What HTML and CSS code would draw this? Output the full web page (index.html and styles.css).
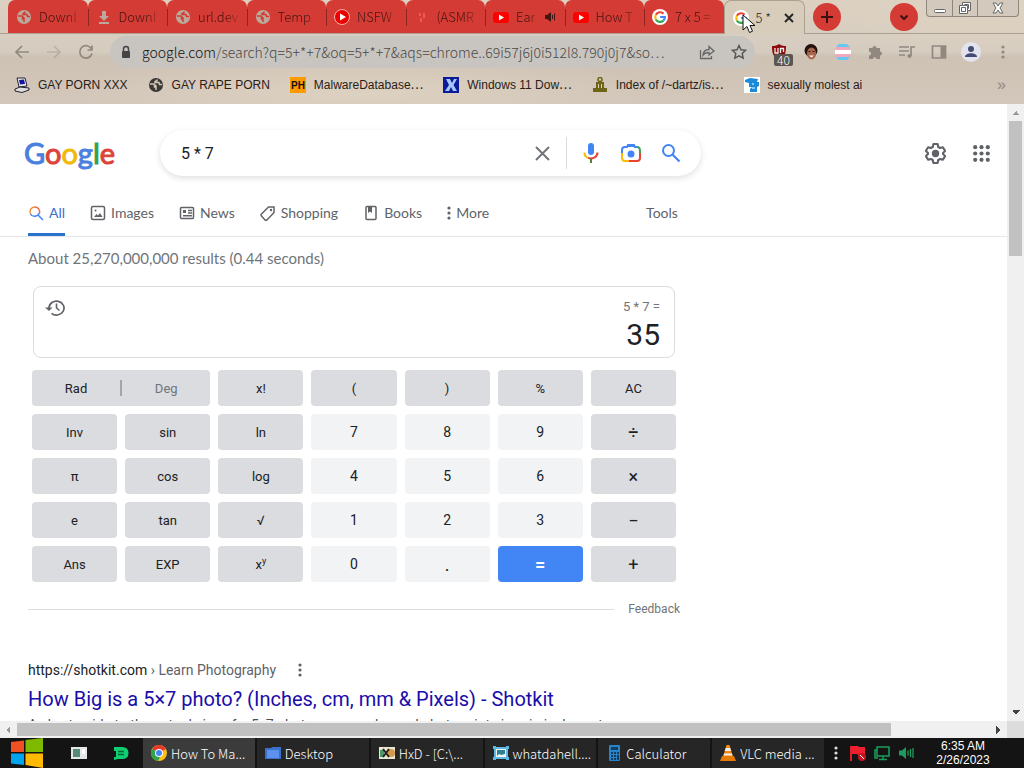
FILE: index.html
```html
<!DOCTYPE html>
<html lang="en">
<head>
<meta charset="utf-8">
<title>5 * 7 - Google Search</title>
<link rel="stylesheet" href="styles.css">
</head>
<body>
<svg class="defs" aria-hidden="true">
  <symbol id="globe" viewBox="0 0 16 16"><circle cx="8" cy="8" r="7" fill="currentColor"/><path d="M2 7h4l1.500 1.500h-1V10H8v3M9 2.500v1.200L7 4.500v1h4l.5 2H14" fill="none" stroke="var(--hole)" stroke-width="1.500"/></symbol>
  <symbol id="yt" viewBox="0 0 16 16"><rect y="3" width="16" height="11" rx="3" fill="#f00"/><path d="M6 5.500v6l5-3z" fill="#fff"/></symbol>
  <symbol id="g" viewBox="0 0 18 18"><circle cx="9" cy="9" r="9" fill="#fff"/><g fill="none" stroke-width="2.400"><path d="M4.300 6.500A5.500 5.500 0 0 1 13 5.200" stroke="#ea4335"/><path d="M4.300 6.500a5.500 5.500 0 0 0 0 5.200" stroke="#fbbc05"/><path d="M4.300 11.700a5.500 5.500 0 0 0 8.500 1.400" stroke="#34a853"/><path d="M12.800 13.100A5.500 5.500 0 0 0 14.500 9H9.200" stroke="#4285f4"/></g></symbol>
  <symbol id="dots" viewBox="0 0 4 16"><g fill="currentColor"><circle cx="2" cy="3" r="1.600"/><circle cx="2" cy="8" r="1.600"/><circle cx="2" cy="13" r="1.600"/></g></symbol>
</svg>
<div class="desktop">
  <header class="chrome">
    <div class="tabstrip">
      <nav class="tabs" aria-label="Open tabs">
        <button class="tab"><svg class="fav gray"><use href="#globe"/></svg><span>Downl</span></button>
        <button class="tab"><svg class="fav gray" viewBox="0 0 16 16"><path d="M6 2h4v5h3l-5 5-5-5h3zM3 13h10v2H3z" fill="currentColor"/></svg><span>Downl</span></button>
        <button class="tab"><svg class="fav gray"><use href="#globe"/></svg><span>url.dev</span></button>
        <button class="tab"><svg class="fav gray"><use href="#globe"/></svg><span>Temp</span></button>
        <button class="tab"><svg class="fav" viewBox="0 0 16 16"><circle cx="8" cy="8" r="7.500" fill="#e00" stroke="#f6b0a8"/><path d="M6 4.500v7l6-3.500z" fill="#fff"/></svg><span>NSFW</span></button>
        <button class="tab"><svg class="fav" viewBox="0 0 16 16"><path d="M6 4v3M10 4v5M7 9v4" stroke="#ef5a50" stroke-width="2"/></svg><span>(ASMR</span></button>
        <button class="tab"><svg class="fav"><use href="#yt"/></svg><span>Ear</span><svg class="sound" viewBox="0 0 12 12"><path d="M0 4h2l4-3v10L2 8H0z" fill="#421512"/><path d="M7.500 4v4M9.500 2.500v7" stroke="#421512"/></svg></button>
        <button class="tab"><svg class="fav"><use href="#yt"/></svg><span>How T</span></button>
        <button class="tab"><svg class="fav"><use href="#g"/></svg><span>7 x 5 =</span></button>
        <button class="tab active"><svg class="fav"><use href="#g"/></svg><span>5 *</span><svg class="close" viewBox="0 0 10 10"><path d="m1 1 8 8M9 1 1 9" stroke="#222" stroke-width="1.800"/></svg></button>
      </nav>
      <button class="round" aria-label="New tab"><svg viewBox="0 0 14 14"><path d="M7 1v12M1 7h12" stroke="#3a1210" stroke-width="2"/></svg></button>
      <span class="grow"></span>
      <button class="round small" aria-label="Search tabs"><svg viewBox="0 0 14 14"><path d="m3.500 5.500 3.500 3.500 3.500-3.500" fill="none" stroke="#3a1210" stroke-width="2"/></svg></button>
      <div class="winbtns">
        <button aria-label="Minimize"><svg viewBox="0 0 14 14"><rect x="1.500" y="8.500" width="11" height="3" rx="1" fill="#fff" stroke="#666"/></svg></button>
        <button aria-label="Restore"><svg viewBox="0 0 14 14"><path d="M4.500 1.500h8v8h-3v3h-8v-8h3z" fill="#fff" stroke="#666"/><path d="M3.500 6.500h4v4h-4zM4.500 4.500h5v5M6.500 4V3.500h4v4H10" fill="none" stroke="#666"/></svg></button>
        <button class="wide" aria-label="Close window"><svg viewBox="0 0 14 14"><path d="M2 2h3l2 3 2-3h3L9 7l3 5H9L7 9l-2 3H2l3-5z" fill="#fff" stroke="#666"/></svg></button>
      </div>
    </div>
    <div class="toolbar">
      <button class="tool" aria-label="Back"><svg viewBox="0 0 16 16"><path d="M15 8H2M8 2 2 8l6 6" class="ln"/></svg></button>
      <button class="tool faint" aria-label="Forward"><svg viewBox="0 0 16 16"><path d="M1 8h13M8 2l6 6-6 6" class="ln"/></svg></button>
      <button class="tool" aria-label="Reload"><svg viewBox="0 0 16 16"><path d="M13.500 5A6.200 6.200 0 1 0 14 9.500M14 1.500v4.500H9.500" class="ln"/></svg></button>
      <div class="omnibox">
        <svg class="lock" viewBox="0 0 10 14"><path d="M2.500 6V4a2.500 2.500 0 0 1 5 0v2" fill="none" stroke="#444" stroke-width="1.500"/><rect x="1" y="6" width="8" height="7" rx="1" fill="#444"/></svg>
        <div class="url"><b>google.com</b>/search?q=5+*+7&amp;oq=5+*+7&amp;aqs=chrome..69i57j6j0i512l8.790j0j7&amp;so⋯</div>
        <button class="tool" aria-label="Share"><svg viewBox="0 0 16 16"><path d="M1.500 6v8.500h11V12M4 11c.5-4 3-5.500 6-5.500V2.500l5 4.500-5 4V8.500c-2.500 0-4.500.5-6 2.500z" fill="none" stroke="#666" stroke-width="1.300"/></svg></button>
        <button class="tool" aria-label="Bookmark"><svg viewBox="0 0 16 16"><path d="m8 1.500 2 4.300 4.700.5-3.500 3.200 1 4.700L8 11.800l-4.200 2.400 1-4.700L1.300 6.300 6 5.800z" fill="none" stroke="#555" stroke-width="1.400"/></svg></button>
      </div>
      <button class="tool shield" aria-label="Ad blocker"><svg viewBox="0 0 16 16"><path d="M8 0c2 1.500 4 2 7 2 0 7-1 11-7 14C2 13 1 9 1 2c3 0 5-.5 7-2z" fill="#8b0b0b"/><path d="M4 4v5h3V4M9.500 9V4.500h3V8" fill="none" stroke="#eee" stroke-width="1.300"/></svg><span class="badge">40</span></button>
      <button class="tool" aria-label="Extension"><svg viewBox="0 0 16 16"><circle cx="8" cy="6.500" r="6.500" fill="#21120e"/><ellipse cx="8.500" cy="9.500" rx="4.500" ry="6" fill="#a9664c"/><path d="M5.500 7.500h2M9.500 7.500h2" stroke="#3b1b12" stroke-width="1.200"/><path d="M6 11.500h5l-2.500 2z" fill="#fff"/></svg></button>
      <button class="tool" aria-label="Extension"><svg viewBox="0 0 16 16"><path d="M4 0h8l3 3H1z" fill="#67c6f2"/><path d="M1 3h14v3H0z" fill="#f3a9bd"/><path d="M0 6h16v4H0z" fill="#fff"/><path d="M0 10h16l-1 3H1z" fill="#f3a9bd"/><path d="M1 13h14l-3 3H4z" fill="#67c6f2"/></svg></button>
      <button class="tool" aria-label="Extensions"><svg viewBox="0 0 16 16"><path d="M2 4h3.500a2 2 0 1 1 4 0H13v3.500a2 2 0 1 1 0 4V15H9.500a1.800 1.800 0 1 0-3.600 0H2v-3.500a2 2 0 1 0 0-4z" fill="#918980"/></svg></button>
      <button class="tool" aria-label="Media"><svg viewBox="0 0 16 16"><path d="M0 3h10M0 7h10M0 11h6M12 12V3h4" class="ln"/><circle cx="10.500" cy="12" r="2" fill="#918980"/></svg></button>
      <button class="tool" aria-label="Side panel"><svg viewBox="0 0 16 16"><path d="M1.500 2h13v12h-13z" class="ln"/><path d="M9.500 2h5v12h-5z" fill="#918980"/></svg></button>
      <button class="tool profile" aria-label="Profile"><svg viewBox="0 0 20 20"><circle cx="10" cy="10" r="10" fill="#e2e3ec"/><circle cx="10" cy="7" r="3" fill="#434c75"/><path d="M4 15c0-5 12-5 12 0z" fill="#434c75"/></svg></button>
      <button class="tool" aria-label="Menu"><svg class="kebab"><use href="#dots"/></svg></button>
    </div>
    <nav class="bookmarks" aria-label="Bookmarks">
      <a href="#"><svg viewBox="0 0 16 16"><path d="M3 1h8l2 8-8 1z" fill="#eee" stroke="#223"/><path d="m5 3 5-.5 1 4.500-5 .5z" fill="#1515a0"/><path d="m1 12 5-2 9 1v2l-7 2.500-7-1.500z" fill="#ddd" stroke="#223"/></svg>GAY PORN XXX</a>
      <a href="#"><svg class="dark"><use href="#globe"/></svg>GAY RAPE PORN</a>
      <a href="#"><svg viewBox="0 0 16 16"><rect width="16" height="16" fill="#f90"/><text x="8" y="12" text-anchor="middle" class="ph">PH</text></svg>MalwareDatabase⋯</a>
      <a href="#"><svg viewBox="0 0 16 16"><rect width="16" height="16" fill="#0a1a9a"/><path d="M3 2h4l2 4 2-4h3l-3.500 6 3.500 6H10L8 10l-2 4H2l4-6z" fill="#a5c8fa"/></svg>Windows 11 Dow⋯</a>
      <a href="#"><svg viewBox="0 0 16 16"><circle cx="8" cy="2.500" r="2" fill="none" stroke="#6d6415" stroke-width="1.500"/><path d="M4 5h8v6h3v4H1v-4h3z" fill="#6d6415"/><path d="M6.500 7v4M9.500 7v4" stroke="#ddd1b8"/></svg>Index of /~dartz/is⋯</a>
      <a href="#"><svg viewBox="0 0 16 16"><rect width="16" height="16" fill="#fff"/><path d="m1 3 5-2 8 1-1 3h2v4l-2 1v5H6v-3l2-2H5V6L1 5z" fill="#1b8bd8"/><path d="M8 7h2M8 11h3" stroke="#fff"/></svg>sexually molest ai</a>
      <span class="more">»</span>
    </nav>
  </header>

  <div class="view">
    <main class="page">
      <div class="searchrow">
        <a class="logo" href="#" aria-label="Google"><span class="b">G</span><span class="r">o</span><span class="y">o</span><span class="b">g</span><span class="n">l</span><span class="r">e</span></a>
        <form class="search">
          <input type="text" value="5 * 7" aria-label="Search">
          <button type="button" aria-label="Clear"><svg viewBox="0 0 20 20"><path d="m4 4 13 13M17 4 4 17" stroke="#70757a" stroke-width="2"/></svg></button>
          <span class="sep"></span>
          <button type="button" aria-label="Voice"><svg viewBox="0 0 20 20"><rect x="7" width="6" height="12" rx="3" fill="#4285f4"/><path d="M3.500 9.500c0 3 1.500 4.600 3.500 5.400" fill="none" stroke="#fbbc05" stroke-width="2"/><path d="M7 14.900c4 1.500 9.500-.5 9.500-5.400" fill="none" stroke="#ea4335" stroke-width="2"/><path d="M10 15.500V20" stroke="#5b7d3e" stroke-width="2"/></svg></button>
          <button type="button" aria-label="Image search"><svg viewBox="0 0 20 20" fill="none" stroke-width="2"><path d="M1 10V7q0-3 3-3h2l1-2h6l1 2h2" stroke="#4285f4"/><path d="M7 2h6v2H7z" fill="#4285f4"/><path d="M16 4q3 0 3 4v2" stroke="#34a853"/><path d="M1 10v5q0 3 3 3h4" stroke="#fbbc05"/><path d="M8 18h8q3 0 3-3v-5" stroke="#ea4335"/><circle cx="10" cy="11" r="3.500" fill="#4285f4"/></svg></button>
          <button type="submit" aria-label="Search"><svg viewBox="0 0 20 20"><circle cx="7.500" cy="7.500" r="5.500" fill="none" stroke="#4285f4" stroke-width="2"/><path d="m11.500 11.500 7 7" stroke="#4285f4" stroke-width="2.200"/></svg></button>
        </form>
        <span class="grow"></span>
        <button class="icon" aria-label="Settings"><svg viewBox="0 0 20 20"><path d="M8 1h4l.6 2.800 1.800 1L17 4l2.200 3.500-2 2v1l2 2L17 16l-2.600-.8-1.800 1L12 19H8l-.6-2.800-1.800-1L3 16 .8 12.500l2-2v-1l-2-2L3 4l2.600.8 1.800-1z" fill="none" stroke="#5f6368" stroke-width="2" stroke-linejoin="round"/><circle cx="10" cy="10" r="3.500" fill="#5f6368"/></svg></button>
        <button class="icon" aria-label="Apps"><svg viewBox="0 0 20 20"><g fill="#5f6368"><circle cx="4" cy="4" r="2"/><circle cx="10" cy="4" r="2"/><circle cx="16" cy="4" r="2"/><circle cx="4" cy="10" r="2"/><circle cx="10" cy="10" r="2"/><circle cx="16" cy="10" r="2"/><circle cx="4" cy="16" r="2"/><circle cx="10" cy="16" r="2"/><circle cx="16" cy="16" r="2"/></g></svg></button>
      </div>
      <nav class="modes">
        <a class="on" href="#"><svg viewBox="0 0 16 16" fill="none" stroke-width="1.500"><path d="M2.500 9A4.800 4.800 0 0 1 7 2" stroke="#ea8a35"/><path d="M7 2a4.800 4.800 0 0 1 4.500 6" stroke="#ea6a55"/><path d="M2.500 9C4 12 9 12.500 11.500 8M10 10l5 5" stroke="#4285f4"/></svg>All</a>
        <a href="#"><svg viewBox="0 0 16 16"><rect x="1.500" y="1.500" width="13" height="13" rx="1.500" class="st"/><path d="m4 12 2.500-3 1.500 1.500L10 8l2.500 4z" fill="#5f6368"/><circle cx="5.500" cy="5.500" r="1" fill="#5f6368"/></svg>Images</a>
        <a href="#"><svg viewBox="0 0 16 16"><rect x="1.500" y="2.500" width="13" height="11" rx="1" class="st"/><path d="M4 5h3v3H4z" fill="#5f6368"/><path d="M9 5.500h4M9 8h4M4 10.700h9" class="st"/></svg>News</a>
        <a href="#"><svg viewBox="0 0 16 16"><path d="M8.500 2H14v5.500L7 15q-1 .5-2 0l-3.500-4q-1-1 0-2z" class="st"/><circle cx="11" cy="5" r="1.200" fill="#5f6368"/></svg>Shopping</a>
        <a href="#"><svg viewBox="0 0 16 16"><rect x="3" y="1.500" width="10" height="13" rx="1" class="st"/><path d="M5 2h4v6L7 6.500 5 8z" fill="#5f6368"/></svg>Books</a>
        <a class="morelink" href="#"><svg class="kebab"><use href="#dots"/></svg>More</a>
        <a class="tools" href="#">Tools</a>
      </nav>
      <div class="results">
        <p class="stats">About 25,270,000,000 results (0.44 seconds)</p>
        <section class="calc">
          <div class="display">
            <svg viewBox="0 0 20 20"><path d="M4 10a7.500 7 0 1 1 2.500 5.300" fill="none" stroke="#5f6368" stroke-width="1.700"/><path d="M0 9.500h7.500L4 13z" fill="#5f6368"/><path d="M11.500 5.500V10l3 2.500" fill="none" stroke="#5f6368" stroke-width="1.600"/></svg>
            <div class="nums"><span class="expr">5 * 7 =</span><output>35</output></div>
          </div>
          <div class="keys">
            <div class="key mode"><button>Rad</button><i></i><button class="off">Deg</button></div><button class="key">x!</button><button class="key">(</button><button class="key">)</button><button class="key">%</button><button class="key">AC</button>
            <button class="key">Inv</button><button class="key">sin</button><button class="key">ln</button><button class="key num">7</button><button class="key num">8</button><button class="key num">9</button><button class="key op">÷</button>
            <button class="key">π</button><button class="key">cos</button><button class="key">log</button><button class="key num">4</button><button class="key num">5</button><button class="key num">6</button><button class="key op">×</button>
            <button class="key">e</button><button class="key">tan</button><button class="key">√</button><button class="key num">1</button><button class="key num">2</button><button class="key num">3</button><button class="key op">−</button>
            <button class="key">Ans</button><button class="key">EXP</button><button class="key"><span>x<sup>y</sup></span></button><button class="key num">0</button><button class="key num op">.</button><button class="key eq">=</button><button class="key op">+</button>
          </div>
        </section>
        <div class="feedback"><hr><a href="#">Feedback</a></div>
        <article class="hit">
          <div class="cite"><span>https://shotkit.com <em>› Learn Photography</em></span><svg class="kebab"><use href="#dots"/></svg></div>
          <h3><a href="#">How Big is a 5×7 photo? (Inches, cm, mm &amp; Pixels) - Shotkit</a></h3>
          <p>A short guide to the actual size of a 5x7 photo, commonly used photo print sizes in inches, etc.</p>
        </article>
      </div>
    </main>
    <div class="vbar"><i class="up"></i><div class="thumb"></div><i class="down"></i></div>
  </div>
  <div class="hbar"><i class="left"></i><div class="thumb"></div><i class="right"></i><div class="corner"></div></div>

  <footer class="taskbar">
    <button class="start" aria-label="Start"><svg viewBox="0 0 34 30"><path d="M1 4l13-1.500V14H1z" fill="#f25022"/><path d="M15.500 2 33 0v14H15.500z" fill="#7fba00"/><path d="M1 15.500h13V27L1 25.500z" fill="#00a4ef"/><path d="M15.500 15.500H33V30l-17.500-3z" fill="#ffb900"/></svg></button>
    <button class="pin" aria-label="Viewer"><svg viewBox="0 0 16 16"><rect y="2" width="16" height="12" fill="#e4e8e4"/><path d="M2 4h7v8H2z" fill="#55897a"/><path d="M11 4h3v5h-3z" fill="#fff"/></svg></button>
    <button class="pin" aria-label="Notes"><svg viewBox="0 0 16 16"><path d="M1 2h8q6.500 0 6.500 6T9 14H5l-4 1v-3h2V6H1z" fill="#10cf72"/><path d="M5 6.500h6M5 9.500h6" stroke="#063" stroke-width="1.500"/></svg></button>
    <nav class="tasks">
      <button class="task current"><svg viewBox="0 0 16 16"><circle cx="8" cy="8" r="8" fill="#fbc116"/><path d="M8 8 1 4a8 8 0 0 1 14 0z" fill="#e33b2e"/><path d="M8 8 1 4a8 8 0 0 0 6 12l3-6z" fill="#2fa24c"/><circle cx="8" cy="8" r="4" fill="#fff"/><circle cx="8" cy="8" r="3" fill="#4285f4"/></svg>How To Ma...</button>
      <button class="task"><svg viewBox="0 0 16 16"><path d="M0 3h6l1-1h9v12H0z" fill="#3c70c8"/><path d="M2 5h12v8H2z" fill="#5b92ee"/></svg>Desktop</button>
      <button class="task"><svg viewBox="0 0 16 16"><rect y="2" width="16" height="12" fill="#e9e6d2"/><path d="M1 5h4v7H1z" fill="#4b9a68"/><circle cx="12" cy="8" r="4" fill="#d49a4a"/><path d="m4 4 6 8M10 4l-6 8" stroke="#222" stroke-width="2"/></svg>HxD - [C:\...</button>
      <button class="task"><svg viewBox="0 0 16 16"><path d="M0 1h3v1h10V1h3v3h-1v8h1v3h-3v-1H3v1H0v-3h1V4H0z" fill="#60b8e4"/><path d="M3 4h10v8H3z" fill="#eef6f3"/><path d="M4 5h8v4l-4 1-2-1-2 2z" fill="#2f7e91"/></svg>whatdahell....</button>
      <button class="task"><svg viewBox="0 0 16 16"><rect x="3" width="11" height="16" rx="1" fill="#2584ce"/><path d="M5 2h7v3H5z" fill="#173d5b"/><path d="M5 7h2v2H5zm3 0h2v2H8zm3 0h2v2h-2zM5 10h2v2H5zm3 0h2v2H8zm3 0h2v5h-2zM5 13h2v2H5zm3 0h2v2H8z" fill="#173d5b"/></svg>Calculator</button>
      <button class="task"><svg viewBox="0 0 16 16"><path d="M6.500 0h3L13 12H3z" fill="#f28b10"/><path d="M5.800 3h4.400l1 3H4.800zM4 8.500h8l.5 2H3.500z" fill="#eee"/><path d="M2 11h12l2 5H0z" fill="#e87a08"/></svg>VLC media ...</button>
    </nav>
    <div class="tray">
      <svg class="kebab"><use href="#dots"/></svg>
      <svg viewBox="0 0 16 16"><path d="M1 1v15" stroke="#e0202c" stroke-width="2"/><path d="M2 1h6l1 1h6v8H8L7 9H2z" fill="#ee202f"/><circle cx="12" cy="12" r="4" fill="#c51422"/><path d="m10 10 4 4" stroke="#fff"/></svg>
      <svg viewBox="0 0 16 16"><path d="M3 2h12v9H3zM9 11v3M5 14.500h8M3 5H1v8h3" fill="none" stroke="#1b9c5c" stroke-width="1.500"/></svg>
      <svg viewBox="0 0 16 16"><path d="M1 5.500h3L8 2v12l-4-3.500H1z" fill="#1b9c5c"/><path d="M10 5.500v5M12.500 4v8M15 3v10" stroke="#1b9c5c" stroke-width="1.300"/></svg>
    </div>
    <time class="clock"><span>6:35 AM</span><span>2/26/2023</span></time>
  </footer>
  <svg class="cursor" viewBox="0 0 14 20"><path d="M1 1v15l4-3.500 2.500 6 3-1.300L8 11.500h5z" fill="#fff" stroke="#111"/></svg>
</div>
</body>
</html>
```
FILE: styles.css
```css
* { box-sizing: border-box; }
body { margin: 0; font-family: Roboto, "Liberation Sans", sans-serif; }
button { border: 0; padding: 0; background: none; font: inherit; color: inherit; }
a { color: inherit; text-decoration: none; }
svg { flex: none; width: 16px; height: 16px; display: block; }
.defs { position: absolute; width: 0; height: 0; }
.desktop { position: relative; display: flex; flex-direction: column; height: 100vh; overflow: hidden; }
.grow { flex: 1; }
.kebab { width: 4px; color: #5f6368; }

.chrome {
  font-family: "Noto Sans CJK KR", sans-serif;
  font-weight: 300;
  background:
    radial-gradient(ellipse 180px 50px at 96% 8%, #ded2c1, transparent),
    radial-gradient(ellipse 300px 40px at 35% 90%, #ddd1c1, transparent),
    linear-gradient(#dcd1c1 0, #d5ccc0 50%, #cec2b4 54%, #d2c7ba 100%);
}
.tabstrip { display: flex; align-items: center; height: 34px; padding: 0 5px 0 8px; border-bottom: 1px solid #aba091; }
.tabs { display: flex; align-self: stretch; flex: 0 1 797px; min-width: 0; }
.tab {
  --hole: #d43b34;
  position: relative; flex: 1 1 0; min-width: 0; height: 33px; display: flex; align-items: center; gap: 7px; padding: 0 4px 0 8px;
  border-radius: 7px 7px 0 0; background: #d43b34; color: #421512; font-size: 13px; overflow: hidden; white-space: nowrap; text-align: left;
}
.tab + .tab::before { content: ""; position: absolute; left: 0; top: 9px; height: 17px; border-left: 1px solid #8f2420; }
.tab span { flex: 1; min-width: 0; overflow: hidden; mask-image: linear-gradient(90deg, #000 60%, transparent); }
.tab.active { background: #d8ccbb; border: 1px solid #aba091; border-bottom: 0; height: 34px; color: #222; }
.tab.active::before { display: none; }
.tab.active span { mask-image: none; }
.gray { color: #bba89b; }
.sound { width: 12px; height: 12px; margin-right: 4px; }
.close { width: 10px; height: 10px; margin-right: 6px; }
.round { flex: none; width: 28px; height: 28px; margin-left: 8px; border-radius: 50%; background: #d43b34; display: grid; place-items: center; }
.round svg { width: 14px; height: 14px; }
.round.small { margin-right: 8px; }
.winbtns { flex: none; display: flex; align-self: flex-start; height: 17px; border: 1px solid #8d867d; border-top: 0; border-radius: 0 0 4px 4px; background: #d3cabd; }
.winbtns button { width: 25px; display: grid; place-items: center; }
.winbtns button + button { border-left: 1px solid #8d867d; }
.winbtns .wide { width: 41px; }
.winbtns svg { width: 14px; height: 14px; }

.toolbar { display: flex; align-items: center; height: 36px; padding: 0 5px 0 6px; color: #918980; }
.tool { position: relative; flex: none; width: 32px; height: 32px; display: grid; place-items: center; }
.faint { opacity: .4; }
.ln { fill: none; stroke: #918980; stroke-width: 1.7; }
.toolbar .kebab { color: #918980; }
.profile svg { width: 20px; height: 20px; }
.omnibox { flex: 1; min-width: 0; display: flex; align-items: center; height: 32px; margin: 0 8px; padding-left: 11px; border-radius: 16px; background: #c8c5c1; }
.lock { width: 10px; height: 14px; margin-right: 11px; }
.url { flex: 1; min-width: 0; overflow: hidden; white-space: nowrap; font-size: 14px; line-height: 24px; color: #4c4945; }
.url b { font-weight: 300; color: #111; }
.badge { position: absolute; left: 11px; top: 18px; padding: 0 3px; border-radius: 2px; background: #5c5650; color: #fff; font-size: 12px; line-height: 12px; }

.bookmarks { display: flex; align-items: center; gap: 20px; height: 34px; padding: 0 18px 4px 14px; font: 12px/20px "Liberation Sans", "Noto Sans CJK KR", sans-serif; color: #2a2018; white-space: nowrap; }
.bookmarks a { display: flex; align-items: center; gap: 8px; height: 20px; }
.dark { color: #3b3836; --hole: #d2c6b7; }
.ph { font: bold 10px "Liberation Sans", sans-serif; fill: #111; }
.more { margin-left: auto; color: #918980; font-size: 16px; }

.view { flex: 1; min-height: 0; display: flex; }
.page { flex: 1; min-width: 0; overflow: hidden; background: #fff; }
.searchrow { display: flex; align-items: center; padding: 26px 3px 0 24px; }
.logo { width: 136px; font: 400 29px/46px Lato, sans-serif; -webkit-text-stroke: 1px; }
.b { color: #4a80e0; } .r { color: #dc4437; } .y { color: #f0b90e; } .n { color: #34a050; }
.search { flex: 0 1 541px; display: flex; align-items: center; height: 46px; padding: 0 10px 0 19px; border-radius: 23px; background: #fff; box-shadow: 0 2px 6px #0002; }
.search input { flex: 1; min-width: 0; border: 0; outline: 0; background: none; font: 16px Roboto, sans-serif; color: #202124; }
.search button { width: 40px; height: 40px; display: grid; place-items: center; }
.search svg { width: 20px; height: 20px; }
.sep { width: 1px; height: 32px; margin: 0 4px; background: #dadce0; }
.icon { width: 46px; height: 40px; display: grid; place-items: center; }
.icon svg { width: 21px; height: 21px; }
.modes { display: flex; align-items: stretch; gap: 25px; height: 61px; padding: 16px 0 0 28px; border-bottom: 1px solid #e4e6e8; font: 14px Lato, sans-serif; color: #5f6368; }
.modes a { display: flex; align-items: center; gap: 5px; border-bottom: 3px solid transparent; }
.modes .on { color: #3b6fd0; border-color: #2a72cc; }
.tools { margin-left: 132px; }
.st { fill: none; stroke: #5f6368; stroke-width: 1.5; }
.results { width: 652px; margin-left: 28px; }
.stats { margin: 11px 0 18px; font: 15px/20px Lato, sans-serif; color: #70757a; }
.calc { padding: 0 4px; }
.display { display: flex; justify-content: space-between; height: 72px; margin: 0 1px 12px; padding: 11px 14px 0 11px; border: 1px solid #dadce0; border-radius: 8px; }
.display svg { width: 20px; height: 20px; }
.nums { display: flex; flex-direction: column; align-items: flex-end; }
.expr { font-size: 13px; line-height: 18px; color: #70757a; }
.nums output { font-size: 30px; line-height: 38px; color: #202124; }
.keys { display: grid; grid-template-columns: repeat(7, 1fr); gap: 8px; }
.key { height: 36px; border-radius: 4px; background: #dadce0; color: #202124; font-size: 13px; }
.mode { grid-column: span 2; display: flex; align-items: center; }
.mode button { flex: 1; }
.mode i { width: 2px; height: 16px; background: #a2a5a9; }
.off { color: #70757a; }
.num { background: #f1f3f4; font-size: 14px; }
.op { font-size: 18px; font-weight: 400; }
.eq { background: #4285f4; color: #fff; font-size: 18px; font-weight: 700; }
.key sup { font-size: 9px; line-height: 0; }
.feedback { display: flex; align-items: center; gap: 14px; margin-top: 18px; font-size: 12px; line-height: 18px; color: #70757a; }
.feedback hr { flex: 1; margin: 0; border: 0; border-top: 1px solid #dadce0; }
.hit { margin-top: 42px; }
.cite { display: flex; align-items: center; gap: 22px; font-size: 14px; line-height: 20px; color: #202124; }
.cite em { font-style: normal; color: #5f6368; }
.hit h3 { margin: 6px 0 2px; font-size: 20px; font-weight: 400; line-height: 26px; color: #1a0dab; white-space: nowrap; }
.hit p { margin: 0; font-size: 14px; line-height: 22px; color: #4d5156; white-space: nowrap; }

.vbar { width: 17px; display: flex; flex-direction: column; align-items: center; background: #f0f0f0; }
.vbar .thumb { width: 13px; height: 135px; background: #c1c1c1; margin-bottom: auto; }
.up, .down { width: 8px; height: 17px; }
.up { background: conic-gradient(from 135deg at 50% 0, #999 90deg, transparent 0) 0 7px / 8px 4px no-repeat; }
.down { background: conic-gradient(from 315deg at 50% 100%, #444 90deg, transparent 0) 0 6px / 8px 4px no-repeat; }
.hbar { display: flex; align-items: center; height: 17px; background: #f0f0f0; }
.hbar .thumb { flex: 0 1 874px; height: 13px; background: #c1c1c1; }
.left, .right { width: 17px; height: 8px; }
.left { background: conic-gradient(from 45deg at 0 50%, #999 90deg, transparent 0) 6px 0 / 4px 8px no-repeat; }
.right { margin-left: auto; background: conic-gradient(from 225deg at 100% 50%, #444 90deg, transparent 0) 6px 0 / 4px 8px no-repeat; }
.corner { width: 17px; height: 17px; background: #dcdcdc; }

.taskbar { display: flex; align-items: center; height: 30px; background: #141414; color: #fff; font: 300 13px "Noto Sans CJK KR", sans-serif; }
.start { width: 54px; display: grid; place-items: center; }
.start svg { width: 34px; height: 30px; }
.pin { width: 42px; margin-left: 4px; display: grid; place-items: center; }
.pin + .pin { margin: 0 1px 0 0; }
.tasks { flex: 1; min-width: 0; align-self: stretch; display: grid; grid-template-columns: repeat(6, 1fr); gap: 2px; }
.task { display: flex; align-items: center; gap: 4px; padding-left: 8px; min-width: 0; overflow: hidden; background: #262626; white-space: nowrap; }
.current { background: #3b3b3b; }
.tray { display: flex; align-items: center; gap: 8px; padding-left: 10px; }
.tray .kebab { color: #ddd; margin-right: 4px; }
.clock { width: 110px; display: flex; flex-direction: column; align-items: center; padding-right: 12px; font: 12px/14px "Liberation Sans", sans-serif; }
.cursor { position: absolute; left: 742px; top: 14px; width: 14px; height: 20px; }
```
